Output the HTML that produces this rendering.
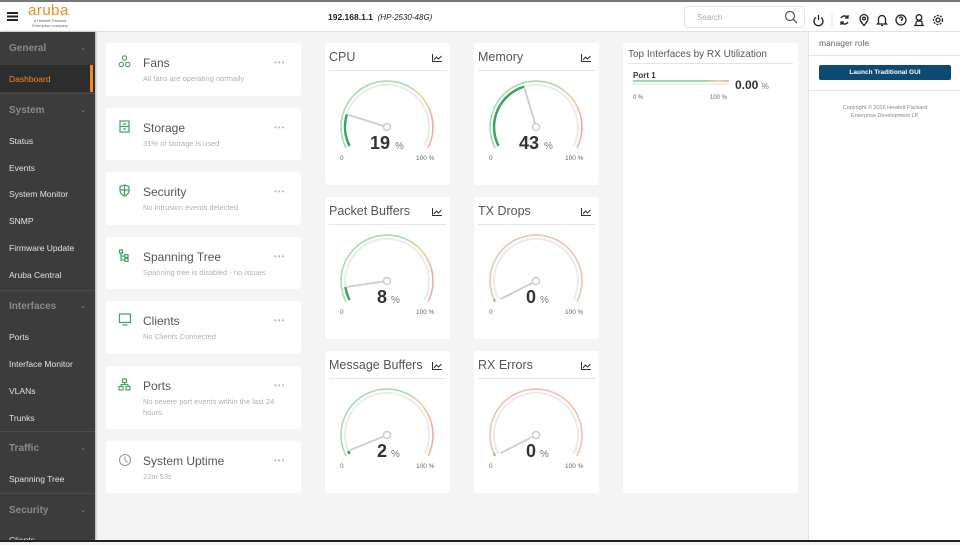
<!DOCTYPE html>
<html><head><meta charset="utf-8"><style>
*{margin:0;padding:0;box-sizing:border-box}
body{width:960px;height:542px;overflow:hidden;background:#f4f4f4;font-family:"Liberation Sans",sans-serif;position:relative}
.abs{position:absolute}
#top{left:0;top:0;width:960px;height:32px;background:#fff;border-top:2px solid #777;border-bottom:1px solid #e2e2e2}
#side{left:0;top:32px;width:95px;height:508px;background:#3c3c3c;box-shadow:1px 0 2px rgba(0,0,0,.3)}
.sh{position:absolute;left:9px;font-size:10px;font-weight:bold;color:#8a8a8a}
.chev{position:absolute;left:80px;font-size:7px;color:#888}
.si{position:absolute;left:9px;font-size:8.5px;color:#e2e2e2}
.sep{position:absolute;left:0;width:95px;height:1px;background:#4c4c4c}
.card{position:absolute;background:#fff;border-radius:3px}
.ct{position:absolute;left:37px;font-size:12px;color:#555}
.cs{position:absolute;left:37px;font-size:7.5px;color:#b0b0b0;line-height:11px;width:140px}
.dots{position:absolute;left:168px;font-size:8px;color:#bbb;letter-spacing:1px}
.ic{position:absolute;left:12px}
.g{position:absolute;background:#fff;border-radius:3px;width:125px;height:142px}
.gt{position:absolute;left:4px;top:7px;font-size:12.5px;color:#555}
.gl{position:absolute;left:4px;right:4px;top:27px;height:1px;background:#e4e4e4}
.gi{position:absolute;right:8px;top:11px}
.g svg.ga{position:absolute;left:0;top:0}
#bottom{left:0;top:540px;width:960px;height:2px;background:#222}
</style></head><body>
<div id="top" class="abs">
 <div class="abs" style="left:7px;top:10px;width:11px;height:1.5px;background:#222;box-shadow:0 3.5px 0 #222,0 7px 0 #222"></div>
 <div class="abs" style="left:28px;top:0px;font-size:15px;color:#f28a20;letter-spacing:0.5px">aruba</div>
 <div class="abs" style="left:30px;top:17px;font-size:4px;color:#666;line-height:4.5px;text-align:center;width:40px">a Hewlett Packard<br>Enterprise company</div>
 <div class="abs" style="left:328px;top:10px;font-size:8.5px;color:#222"><b>192.168.1.1</b> &nbsp;<i style="font-size:8px">(HP-2530-48G)</i></div>
 <div class="abs" style="left:684px;top:4px;width:121px;height:22px;border:1px solid #e3e3e3;border-radius:4px"><span class="abs" style="left:12px;top:6px;font-size:8px;color:#aaa">Search</span>
 <svg class="abs" style="left:99px;top:3px" width="14" height="14" viewBox="0 0 14 14"><circle cx="6" cy="6" r="4.5" fill="none" stroke="#555" stroke-width="1.2"/><path d="M9.3 9.3L13 13" stroke="#555" stroke-width="1.3"/></svg></div>
 <svg class="abs" style="left:812px;top:11px" width="140" height="14" viewBox="0 0 140 14" fill="none" stroke="#222" stroke-width="1.3">
  <path d="M4 4.5A4.5 4.5 0 1 0 9 4.5M6.5 2v5"/>
  <line x1="20" y1="1" x2="20" y2="13" stroke="#ddd" stroke-width="1"/>
  <path d="M29 5a4 4 0 0 1 7 0M36 9a4 4 0 0 1-7 0M36 2v3h-3M29 12V9h3"/>
  <path d="M52 12.5c-3-3.5-4-5-4-7a4 4 0 0 1 8 0c0 2-1 3.5-4 7z"/><circle cx="52" cy="5.5" r="1.4"/>
  <path d="M66.5 10V6a3.5 3.5 0 0 1 7 0v4l1 1h-9zM69 12.5h2"/>
  <circle cx="89" cy="7" r="5"/><path d="M87.5 5.5a1.5 1.5 0 1 1 2 1.4v1.2M89.5 9.6v.6"/>
  <circle cx="107" cy="4.5" r="2.8"/><path d="M102 12.5h10M104 12.5v-3c0-1 1.5-1.5 3-1.5s3 .5 3 1.5v3"/>
  <circle cx="126" cy="7" r="2"/><circle cx="126" cy="7" r="4.5" stroke-dasharray="2 1.3"/>
 </svg>
</div>

<div id="side" class="abs">
 <div class="sh" style="top:11px">General</div><div class="chev" style="top:12px">&#8964;</div>
 <div class="abs" style="left:0;top:33px;width:95px;height:27px;background:#2d2d2d"></div>
 <div class="abs" style="left:90px;top:33px;width:3px;height:27px;background:#f28a20"></div>
 <div class="si" style="top:42px;color:#f28a20">Dashboard</div>
 <div class="sep" style="top:61px"></div>
 <div class="sh" style="top:73px">System</div><div class="chev" style="top:74px">&#8964;</div>
 <div class="si" style="top:104px">Status</div>
 <div class="si" style="top:131px">Events</div>
 <div class="si" style="top:157px">System Monitor</div>
 <div class="si" style="top:184px">SNMP</div>
 <div class="si" style="top:211px">Firmware Update</div>
 <div class="si" style="top:238px">Aruba Central</div>
 <div class="sep" style="top:258px"></div>
 <div class="sh" style="top:269px">Interfaces</div><div class="chev" style="top:270px">&#8964;</div>
 <div class="si" style="top:300px">Ports</div>
 <div class="si" style="top:327px">Interface Monitor</div>
 <div class="si" style="top:354px">VLANs</div>
 <div class="si" style="top:381px">Trunks</div>
 <div class="sep" style="top:399px"></div>
 <div class="sh" style="top:411px">Traffic</div><div class="chev" style="top:412px">&#8964;</div>
 <div class="si" style="top:442px">Spanning Tree</div>
 <div class="sep" style="top:461px"></div>
 <div class="sh" style="top:473px">Security</div><div class="chev" style="top:474px">&#8964;</div>
 <div class="si" style="top:503px">Clients</div>
</div>

<!-- left cards -->
<div class="card" style="left:106px;top:43px;width:195px;height:53px">
 <svg class="ic" style="top:12px" width="13" height="13" viewBox="0 0 13 13" fill="none" stroke="#3aa35f" stroke-width="1.1"><circle cx="6.5" cy="3" r="2.2"/><circle cx="3.3" cy="9.5" r="2.2"/><circle cx="9.7" cy="9.5" r="2.2"/></svg>
 <div class="ct" style="top:13px">Fans</div><div class="dots" style="top:15px">•••</div>
 <div class="cs" style="top:30px">All fans are operating normally</div></div>
<div class="card" style="left:106px;top:108px;width:195px;height:52px">
 <svg class="ic" style="top:12px" width="13" height="13" viewBox="0 0 13 13" fill="none" stroke="#3aa35f" stroke-width="1.2"><rect x="2" y="1" width="9" height="11"/><path d="M2 6.5h9M5 4h3M5 9h3"/></svg>
 <div class="ct" style="top:13px">Storage</div><div class="dots" style="top:15px">•••</div>
 <div class="cs" style="top:30px">31% of storage is used</div></div>
<div class="card" style="left:106px;top:172px;width:195px;height:53px">
 <svg class="ic" style="top:12px" width="13" height="13" viewBox="0 0 13 13" fill="none" stroke="#3aa35f" stroke-width="1.2"><path d="M6.5 1L11 2.5v4c0 3-2.5 5-4.5 5.5C4.5 11.5 2 9.5 2 6.5v-4z"/><path d="M2 6h9M6.5 1v11"/></svg>
 <div class="ct" style="top:13px">Security</div><div class="dots" style="top:15px">•••</div>
 <div class="cs" style="top:30px">No intrusion events detected</div></div>
<div class="card" style="left:106px;top:237px;width:195px;height:52px">
 <svg class="ic" style="top:12px" width="13" height="13" viewBox="0 0 13 13" fill="none" stroke="#3aa35f" stroke-width="1.2"><rect x="1.5" y="1" width="3" height="3"/><rect x="7" y="5.5" width="3" height="3"/><rect x="7" y="9.5" width="3" height="3"/><path d="M3 4v7h4M3 7h4"/></svg>
 <div class="ct" style="top:13px">Spanning Tree</div><div class="dots" style="top:15px">•••</div>
 <div class="cs" style="top:30px">Spanning tree is disabled - no issues</div></div>
<div class="card" style="left:106px;top:301px;width:195px;height:53px">
 <svg class="ic" style="top:12px" width="14" height="13" viewBox="0 0 14 13" fill="none" stroke="#3aa35f" stroke-width="1.2"><rect x="1.5" y="1" width="11" height="8.5"/><path d="M4.5 12h5"/></svg>
 <div class="ct" style="top:13px">Clients</div><div class="dots" style="top:15px">•••</div>
 <div class="cs" style="top:30px">No Clients Connected</div></div>
<div class="card" style="left:106px;top:366px;width:195px;height:63px">
 <svg class="ic" style="top:12px" width="13" height="13" viewBox="0 0 13 13" fill="none" stroke="#3aa35f" stroke-width="1.1"><rect x="4.5" y="1" width="4" height="3.5"/><rect x="1" y="8.5" width="4" height="3.5"/><rect x="8" y="8.5" width="4" height="3.5"/><path d="M6.5 4.5v2M3 8.5v-2h7v2"/></svg>
 <div class="ct" style="top:13px">Ports</div><div class="dots" style="top:15px">•••</div>
 <div class="cs" style="top:30px">No severe port events within the last 24 hours</div></div>
<div class="card" style="left:106px;top:441px;width:195px;height:52px">
 <svg class="ic" style="top:12px" width="14" height="14" viewBox="0 0 14 14" fill="none" stroke="#999" stroke-width="1.1"><circle cx="7" cy="7" r="5.5"/><path d="M7 3.5V7l2.5 2.5"/></svg>
 <div class="ct" style="top:13px">System Uptime</div><div class="dots" style="top:15px">•••</div>
 <div class="cs" style="top:30px">22m 53s</div></div>

<svg width="0" height="0" style="position:absolute"><defs>
<linearGradient id="gr" x1="0" x2="1" y1="0" y2="0"><stop offset="0.7" stop-color="#a6dbb5"/><stop offset="0.88" stop-color="#f7d09a"/><stop offset="1" stop-color="#f4a89a"/></linearGradient>
</defs></svg>

<!-- gauges -->
<div class="g" style="left:325px;top:43px"><div class="gt">CPU</div><div class="gl"></div>
<svg class="gi" width="10" height="8" viewBox="0 0 10 8" fill="none" stroke="#333" stroke-width="1"><path d="M.5 0v7.5H10M2 6l2.5-3 2 2 3-3"/></svg>
<svg class="ga" width="125" height="142"><path d="M21 104.9A46 46 0 1 1 103 104.9" fill="none" stroke="url(#gr)" stroke-width="1.6"/><path d="M24.6 103A42 42 0 1 1 99.4 103" fill="none" stroke="#ebebeb" stroke-width="2"/><path d="M24.6 103A42 42 0 0 1 21.9 71.4" fill="none" stroke="#3aa35f" stroke-width="2.5"/><line x1="62" y1="84" x2="23.8" y2="72" stroke="#ccc" stroke-width="1.8"/><circle cx="62" cy="84" r="3.5" fill="#fff" stroke="#ccc" stroke-width="1.5"/><text x="55" y="106" text-anchor="middle" font-size="18" font-weight="bold" fill="#333">19</text><text x="70" y="106" font-size="10" fill="#777">%</text><text x="15" y="117" font-size="6.5" fill="#666">0</text><text x="91" y="117" font-size="6.5" fill="#666">100 %</text></svg></div>

<div class="g" style="left:474px;top:43px"><div class="gt">Memory</div><div class="gl"></div>
<svg class="gi" width="10" height="8" viewBox="0 0 10 8" fill="none" stroke="#333" stroke-width="1"><path d="M.5 0v7.5H10M2 6l2.5-3 2 2 3-3"/></svg>
<svg class="ga" width="125" height="142"><path d="M21 104.9A46 46 0 1 1 103 104.9" fill="none" stroke="url(#gr)" stroke-width="1.6"/><path d="M24.6 103A42 42 0 1 1 99.4 103" fill="none" stroke="#ebebeb" stroke-width="2"/><path d="M24.6 103A42 42 0 0 1 50.2 43.7" fill="none" stroke="#3aa35f" stroke-width="2.5"/><line x1="62" y1="84" x2="50.7" y2="45.6" stroke="#ccc" stroke-width="1.8"/><circle cx="62" cy="84" r="3.5" fill="#fff" stroke="#ccc" stroke-width="1.5"/><text x="55" y="106" text-anchor="middle" font-size="18" font-weight="bold" fill="#333">43</text><text x="70" y="106" font-size="10" fill="#777">%</text><text x="15" y="117" font-size="6.5" fill="#666">0</text><text x="91" y="117" font-size="6.5" fill="#666">100 %</text></svg></div>

<div class="g" style="left:325px;top:197px"><div class="gt">Packet Buffers</div><div class="gl"></div>
<svg class="gi" width="10" height="8" viewBox="0 0 10 8" fill="none" stroke="#333" stroke-width="1"><path d="M.5 0v7.5H10M2 6l2.5-3 2 2 3-3"/></svg>
<svg class="ga" width="125" height="142"><path d="M21 104.9A46 46 0 1 1 103 104.9" fill="none" stroke="url(#gr)" stroke-width="1.6"/><path d="M24.6 103A42 42 0 1 1 99.4 103" fill="none" stroke="#ebebeb" stroke-width="2"/><path d="M24.6 103A42 42 0 0 1 20.4 90" fill="none" stroke="#3aa35f" stroke-width="2.5"/><line x1="62" y1="84" x2="22.4" y2="89.8" stroke="#ccc" stroke-width="1.8"/><circle cx="62" cy="84" r="3.5" fill="#fff" stroke="#ccc" stroke-width="1.5"/><text x="57" y="106" text-anchor="middle" font-size="18" font-weight="bold" fill="#333">8</text><text x="66" y="106" font-size="10" fill="#777">%</text><text x="15" y="117" font-size="6.5" fill="#666">0</text><text x="91" y="117" font-size="6.5" fill="#666">100 %</text></svg></div>

<div class="g" style="left:474px;top:197px"><div class="gt">TX Drops</div><div class="gl"></div>
<svg class="gi" width="10" height="8" viewBox="0 0 10 8" fill="none" stroke="#333" stroke-width="1"><path d="M.5 0v7.5H10M2 6l2.5-3 2 2 3-3"/></svg>
<svg class="ga" width="125" height="142"><path d="M21 104.9A46 46 0 1 1 103 104.9" fill="none" stroke="#f5bfae" stroke-width="1.6"/><path d="M24.6 103A42 42 0 1 1 99.4 103" fill="none" stroke="#ebebeb" stroke-width="2"/><path d="M21 104.9A46 46 0 0 1 19.8 102" fill="none" stroke="#7cc48a" stroke-width="2"/><line x1="62" y1="84" x2="26.4" y2="102.2" stroke="#ccc" stroke-width="1.8"/><circle cx="62" cy="84" r="3.5" fill="#fff" stroke="#ccc" stroke-width="1.5"/><text x="57" y="106" text-anchor="middle" font-size="18" font-weight="bold" fill="#333">0</text><text x="66" y="106" font-size="10" fill="#777">%</text><text x="15" y="117" font-size="6.5" fill="#666">0</text><text x="91" y="117" font-size="6.5" fill="#666">100 %</text></svg></div>

<div class="g" style="left:325px;top:351px"><div class="gt">Message Buffers</div><div class="gl"></div>
<svg class="gi" width="10" height="8" viewBox="0 0 10 8" fill="none" stroke="#333" stroke-width="1"><path d="M.5 0v7.5H10M2 6l2.5-3 2 2 3-3"/></svg>
<svg class="ga" width="125" height="142"><path d="M21 104.9A46 46 0 1 1 103 104.9" fill="none" stroke="url(#gr)" stroke-width="1.6"/><path d="M24.6 103A42 42 0 1 1 99.4 103" fill="none" stroke="#ebebeb" stroke-width="2"/><path d="M24.6 103A42 42 0 0 1 23.1 99.9" fill="none" stroke="#3aa35f" stroke-width="2.5"/><line x1="62" y1="84" x2="25" y2="99.2" stroke="#ccc" stroke-width="1.8"/><circle cx="62" cy="84" r="3.5" fill="#fff" stroke="#ccc" stroke-width="1.5"/><text x="57" y="106" text-anchor="middle" font-size="18" font-weight="bold" fill="#333">2</text><text x="66" y="106" font-size="10" fill="#777">%</text><text x="15" y="117" font-size="6.5" fill="#666">0</text><text x="91" y="117" font-size="6.5" fill="#666">100 %</text></svg></div>

<div class="g" style="left:474px;top:351px"><div class="gt">RX Errors</div><div class="gl"></div>
<svg class="gi" width="10" height="8" viewBox="0 0 10 8" fill="none" stroke="#333" stroke-width="1"><path d="M.5 0v7.5H10M2 6l2.5-3 2 2 3-3"/></svg>
<svg class="ga" width="125" height="142"><path d="M21 104.9A46 46 0 1 1 103 104.9" fill="none" stroke="#f5bfae" stroke-width="1.6"/><path d="M24.6 103A42 42 0 1 1 99.4 103" fill="none" stroke="#ebebeb" stroke-width="2"/><path d="M21 104.9A46 46 0 0 1 19.8 102" fill="none" stroke="#7cc48a" stroke-width="2"/><line x1="62" y1="84" x2="26.4" y2="102.2" stroke="#ccc" stroke-width="1.8"/><circle cx="62" cy="84" r="3.5" fill="#fff" stroke="#ccc" stroke-width="1.5"/><text x="57" y="106" text-anchor="middle" font-size="18" font-weight="bold" fill="#333">0</text><text x="66" y="106" font-size="10" fill="#777">%</text><text x="15" y="117" font-size="6.5" fill="#666">0</text><text x="91" y="117" font-size="6.5" fill="#666">100 %</text></svg></div>

<!-- top interfaces -->
<div class="card" style="left:623px;top:43px;width:175px;height:450px">
 <div class="abs" style="left:5px;top:6px;font-size:10px;color:#555">Top Interfaces by RX Utilization</div>
 <div class="abs" style="left:5px;right:5px;top:20px;height:1px;background:#e4e4e4"></div>
 <div class="abs" style="left:10px;top:28px;font-size:8px;font-weight:bold;color:#333">Port 1</div>
 <div class="abs" style="left:10px;top:37px;width:96px;height:2px;background:linear-gradient(90deg,#9fd8ad 75%,#f7cf9f 90%,#f4b0a0)"></div>
 <div class="abs" style="left:10px;top:40px;width:96px;height:2px;background:#eee"></div>
 <div class="abs" style="left:112px;top:35px;font-size:12px;font-weight:bold;color:#333">0.00 <span style="font-size:8px;font-weight:normal;color:#777">%</span></div>
 <div class="abs" style="left:10px;top:52px;font-size:6px;color:#666">0 %</div>
 <div class="abs" style="left:87px;top:52px;font-size:6px;color:#666">100 %</div>
</div>

<!-- right panel -->
<div class="abs" style="left:808px;top:32px;width:152px;height:508px;background:#fff;border-left:1px solid #e3e3e3">
 <div class="abs" style="left:10px;top:6px;font-size:8.5px;color:#666">manager role</div>
 <div class="abs" style="left:0;top:23px;width:152px;height:1px;background:#e5e5e5"></div>
 <div class="abs" style="left:10px;top:33px;width:132px;height:15px;background:#0c4a74;border-radius:2px;color:#fff;font-size:6.5px;font-weight:bold;text-align:center;line-height:15px">Launch Traditional GUI</div>
 <div class="abs" style="left:0;top:58px;width:152px;height:1px;background:#e5e5e5"></div>
 <div class="abs" style="left:0;top:72px;width:152px;text-align:center;font-size:5.5px;color:#888;line-height:8px">Copyright © 2016 Hewlett Packard<br>Enterprise Development LP.</div>
</div>
<div id="bottom" class="abs"></div>
</body></html>
